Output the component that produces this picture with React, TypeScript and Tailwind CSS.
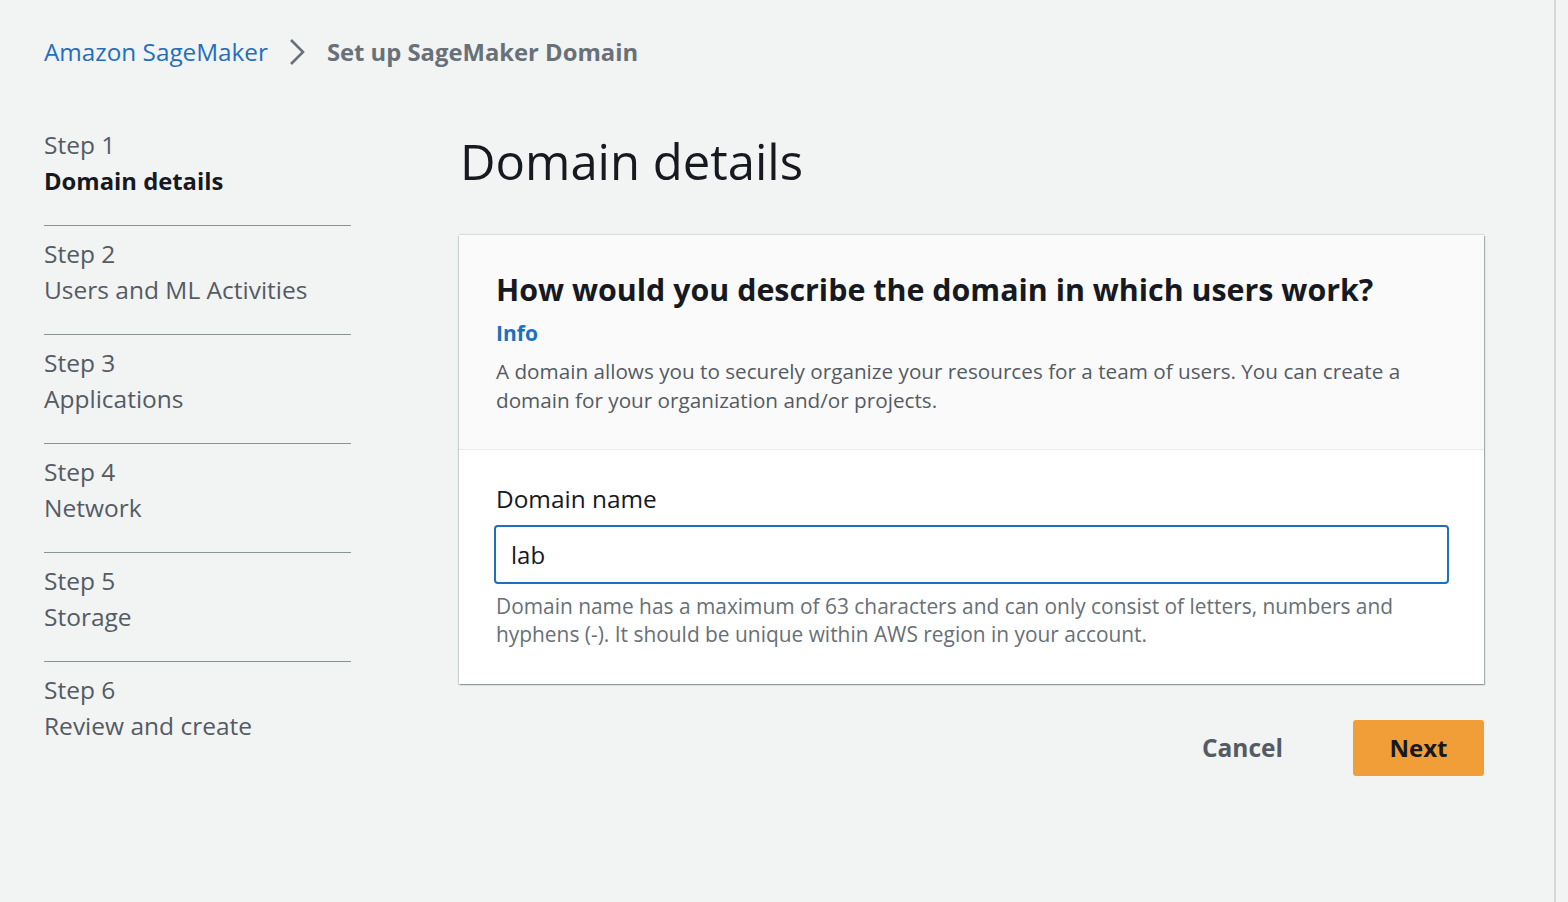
const steps = [
  { n: 1, title: 'Domain details', active: true },
  { n: 2, title: 'Users and ML Activities' },
  { n: 3, title: 'Applications' },
  { n: 4, title: 'Network' },
  { n: 5, title: 'Storage' },
  { n: 6, title: 'Review and create' },
];

function StepNav() {
  return (
    <nav className="w-[307px] shrink-0">
      {steps.map((s, i) => (
        <div key={s.n}>
          {i > 0 && <div className="mb-[10px] h-px bg-[#879596]" />}
          <div className="pb-[26px] text-[24.5px] leading-[36px]">
            <div className="text-[#545b64]">Step {s.n}</div>
            <div className={s.active ? 'text-[23.8px] font-bold text-[#16191f]' : 'text-[#545b64]'}>
              {s.title}
            </div>
          </div>
        </div>
      ))}
    </nav>
  );
}

export default function App() {
  return (
    <div className="relative min-h-[902px] bg-[#f2f3f3] font-['Open_Sans',sans-serif] text-[#16191f]">
      <div className="absolute right-[12px] top-0 h-full w-[2px] bg-[#d5d9da]" />
      <div className="px-[44px] pt-[33px]">
        {/* breadcrumb */}
        <div className="flex items-center text-[24.3px] leading-[38px]">
          <span className="text-[#1f6fc0]">Amazon SageMaker</span>
          <svg className="mr-[22px] ml-[21px]" width="16" height="28" viewBox="0 0 16 28" fill="none">
            <path d="M2 2l12 12L2 26" stroke="#687078" strokeWidth="2.6" />
          </svg>
          <span className="text-[23.8px] font-bold text-[#687078]">Set up SageMaker Domain</span>
        </div>

        <div className="mt-[56px] flex">
          <StepNav />

          <main className="ml-[108px] w-[1025px]">
            <h1 className="pt-[6px] pl-[1px] text-[49px] leading-[56px] font-medium">Domain details</h1>

            <section className="mt-[46px] bg-white shadow-[1px_1px_1px_0_rgba(0,28,36,0.3),-1px_1px_1px_0_rgba(0,28,36,0.15),0_-1px_1px_0_rgba(0,28,36,0.1)]">
              <header className="border-b border-[#eaeded] bg-[#fafafa] px-[37px] pt-[34px] pb-[34px]">
                <h2 className="text-[30.4px] leading-[42px] font-bold">
                  How would you describe the domain in which users work?
                </h2>
                <div className="text-[21px] leading-[44px] font-bold text-[#1f6fc0]">Info</div>
                <p className="mt-[2px] text-[20.7px] leading-[29px] text-[#545b64]">
                  A domain allows you to securely organize your resources for a team of users. You can create a
                  <br />
                  domain for your organization and/or projects.
                </p>
              </header>
              <div className="px-[37px] pt-[33px] pb-[36px]">
                <label className="block text-[24.4px] leading-[32px]">Domain name</label>
                <div className="mt-[10px] mr-[-2px] ml-[-2px] flex h-[59px] items-center rounded-[4px] border-2 border-[#1f6fc0] bg-white px-[15px] text-[24px]">
                  lab
                </div>
                <p className="mt-[8px] text-[20.9px] leading-[28px] text-[#687078]">
                  Domain name has a maximum of 63 characters and can only consist of letters, numbers and
                  <br />
                  hyphens (-). It should be unique within AWS region in your account.
                </p>
              </div>
            </section>

            <div className="mt-[36px] flex items-center justify-end">
              <button className="mr-[70px] text-[24.5px] font-bold text-[#545b64]">Cancel</button>
              <button className="h-[56px] w-[131px] rounded-[3px] bg-[#f19e38] text-[24px] font-bold text-[#16191f]">
                Next
              </button>
            </div>
          </main>
        </div>
      </div>
    </div>
  );
}
